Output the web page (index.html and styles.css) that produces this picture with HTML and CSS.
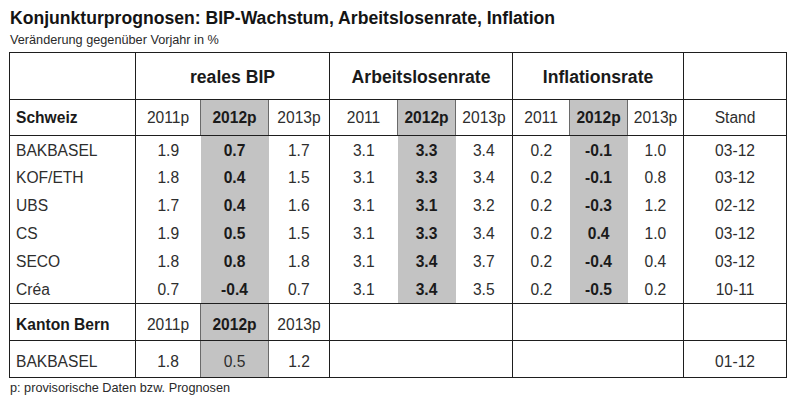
FILE: index.html
```html
<!DOCTYPE html>
<html lang="de">
<head>
<meta charset="utf-8">
<title>Konjunkturprognosen</title>
<link rel="stylesheet" href="styles.css">
</head>
<body>
<div class="page">
  <h1 class="title">Konjunkturprognosen: BIP-Wachstum, Arbeitslosenrate, Inflation</h1>
  <p class="subtitle">Veränderung gegenüber Vorjahr in %</p>
  <table class="grid">
    <colgroup>
      <col class="c-label">
      <col class="c-a1"><col class="c-a2"><col class="c-a3">
      <col class="c-b1"><col class="c-b2"><col class="c-b3">
      <col class="c-c1"><col class="c-c2"><col class="c-c3">
      <col class="c-stand">
    </colgroup>
    <tr class="head">
      <td class="grp"></td>
      <td colspan="3" class="grp">reales BIP</td>
      <td colspan="3" class="grp">Arbeitslosenrate</td>
      <td colspan="3" class="grp">Inflationsrate</td>
      <td></td>
    </tr>
    <tr class="sub">
      <td class="label grp">Schweiz</td>
      <td>2011p</td><td class="hl">2012p</td><td class="grp">2013p</td>
      <td>2011</td><td class="hl">2012p</td><td class="grp">2013p</td>
      <td>2011</td><td class="hl">2012p</td><td class="grp">2013p</td>
      <td>Stand</td>
    </tr>
    <tr class="data first">
      <td class="label grp">BAKBASEL</td>
      <td>1.9</td><td class="hl b">0.7</td><td class="grp">1.7</td>
      <td>3.1</td><td class="hl b">3.3</td><td class="grp">3.4</td>
      <td>0.2</td><td class="hl b">-0.1</td><td class="grp">1.0</td>
      <td>03-12</td>
    </tr>
    <tr class="data">
      <td class="label grp">KOF/ETH</td>
      <td>1.8</td><td class="hl b">0.4</td><td class="grp">1.5</td>
      <td>3.1</td><td class="hl b">3.3</td><td class="grp">3.4</td>
      <td>0.2</td><td class="hl b">-0.1</td><td class="grp">0.8</td>
      <td>03-12</td>
    </tr>
    <tr class="data">
      <td class="label grp">UBS</td>
      <td>1.7</td><td class="hl b">0.4</td><td class="grp">1.6</td>
      <td>3.1</td><td class="hl b">3.1</td><td class="grp">3.2</td>
      <td>0.2</td><td class="hl b">-0.3</td><td class="grp">1.2</td>
      <td>02-12</td>
    </tr>
    <tr class="data">
      <td class="label grp">CS</td>
      <td>1.9</td><td class="hl b">0.5</td><td class="grp">1.5</td>
      <td>3.1</td><td class="hl b">3.3</td><td class="grp">3.4</td>
      <td>0.2</td><td class="hl b">0.4</td><td class="grp">1.0</td>
      <td>03-12</td>
    </tr>
    <tr class="data">
      <td class="label grp">SECO</td>
      <td>1.8</td><td class="hl b">0.8</td><td class="grp">1.8</td>
      <td>3.1</td><td class="hl b">3.4</td><td class="grp">3.7</td>
      <td>0.2</td><td class="hl b">-0.4</td><td class="grp">0.4</td>
      <td>03-12</td>
    </tr>
    <tr class="data last">
      <td class="label grp">Créa</td>
      <td>0.7</td><td class="hl b">-0.4</td><td class="grp">0.7</td>
      <td>3.1</td><td class="hl b">3.4</td><td class="grp">3.5</td>
      <td>0.2</td><td class="hl b">-0.5</td><td class="grp">0.2</td>
      <td>10-11</td>
    </tr>
    <tr class="sub low">
      <td class="label grp">Kanton Bern</td>
      <td>2011p</td><td class="hl">2012p</td><td class="grp">2013p</td>
      <td colspan="3" class="grp"></td>
      <td colspan="3" class="grp"></td>
      <td></td>
    </tr>
    <tr class="sub low plain">
      <td class="label grp">BAKBASEL</td>
      <td>1.8</td><td class="hl">0.5</td><td class="grp">1.2</td>
      <td colspan="3" class="grp"></td>
      <td colspan="3" class="grp"></td>
      <td>01-12</td>
    </tr>
  </table>
  <p class="note">p: provisorische Daten bzw. Prognosen</p>
</div>
</body>
</html>
```

FILE: styles.css
```css
html, body {
  margin: 0;
  padding: 0;
  background: #ffffff;
}

.page {
  font-family: "Liberation Sans", Arial, sans-serif;
  color: #2e2e2e;
  padding-left: 9px;
}

.title {
  margin: 8px 0 0 1px;
  font-size: 17.6px;
  line-height: 20px;
  font-weight: bold;
  color: #141414;
}

.subtitle {
  margin: 5px 0 0 1px;
  font-size: 12.7px;
  line-height: 15px;
  color: #2a2a2a;
}

.grid {
  margin-top: 4px;
  border-collapse: collapse;
  table-layout: fixed;
  width: 777px;
  border: 1px solid #1e1e1e;
  font-size: 15.6px;
}

.c-label { width: 126px; }
.c-a1 { width: 65px; }
.c-a2 { width: 68px; }
.c-a3 { width: 61px; }
.c-b1 { width: 68px; }
.c-b2 { width: 58px; }
.c-b3 { width: 57px; }
.c-c1 { width: 57px; }
.c-c2 { width: 58px; }
.c-c3 { width: 56px; }
.c-stand { width: 103px; }

.grid td {
  padding: 0;
  text-align: center;
  vertical-align: middle;
  white-space: nowrap;
}

.grid td.grp {
  border-right: 1px solid #1e1e1e;
}

.grid td.label {
  text-align: left;
  padding-left: 6px;
}

.head td {
  height: 43px;
  padding-top: 3px;
  font-size: 17.6px;
  font-weight: bold;
  color: #1a1a1a;
  border-bottom: 1px solid #1e1e1e;
}

.sub td {
  height: 35px;
  border-bottom: 1px solid #1e1e1e;
}

.sub td.label {
  font-weight: bold;
  color: #1a1a1a;
}

.sub td.hl {
  font-weight: bold;
  color: #1a1a1a;
  border-left: 1px solid #6a6a6a;
  border-right: 1px solid #6a6a6a;
}

.sub.plain td.hl {
  font-weight: normal;
  color: #2e2e2e;
}

.sub.plain td.label {
  font-weight: normal;
  color: #2e2e2e;
}

.low td {
  height: 31px;
  padding-top: 5px;
}

.data td {
  height: 28px;
}

.data.first td {
  height: 27px;
  padding-top: 1px;
}

.data.last td {
  height: 27px;
  border-bottom: 1px solid #1e1e1e;
}

.hl {
  background: #c3c3c3;
}

.b {
  font-weight: bold;
  color: #1a1a1a;
}

.note {
  margin: 3px 0 0 1px;
  font-size: 12.7px;
  line-height: 15px;
  color: #2a2a2a;
}
```
